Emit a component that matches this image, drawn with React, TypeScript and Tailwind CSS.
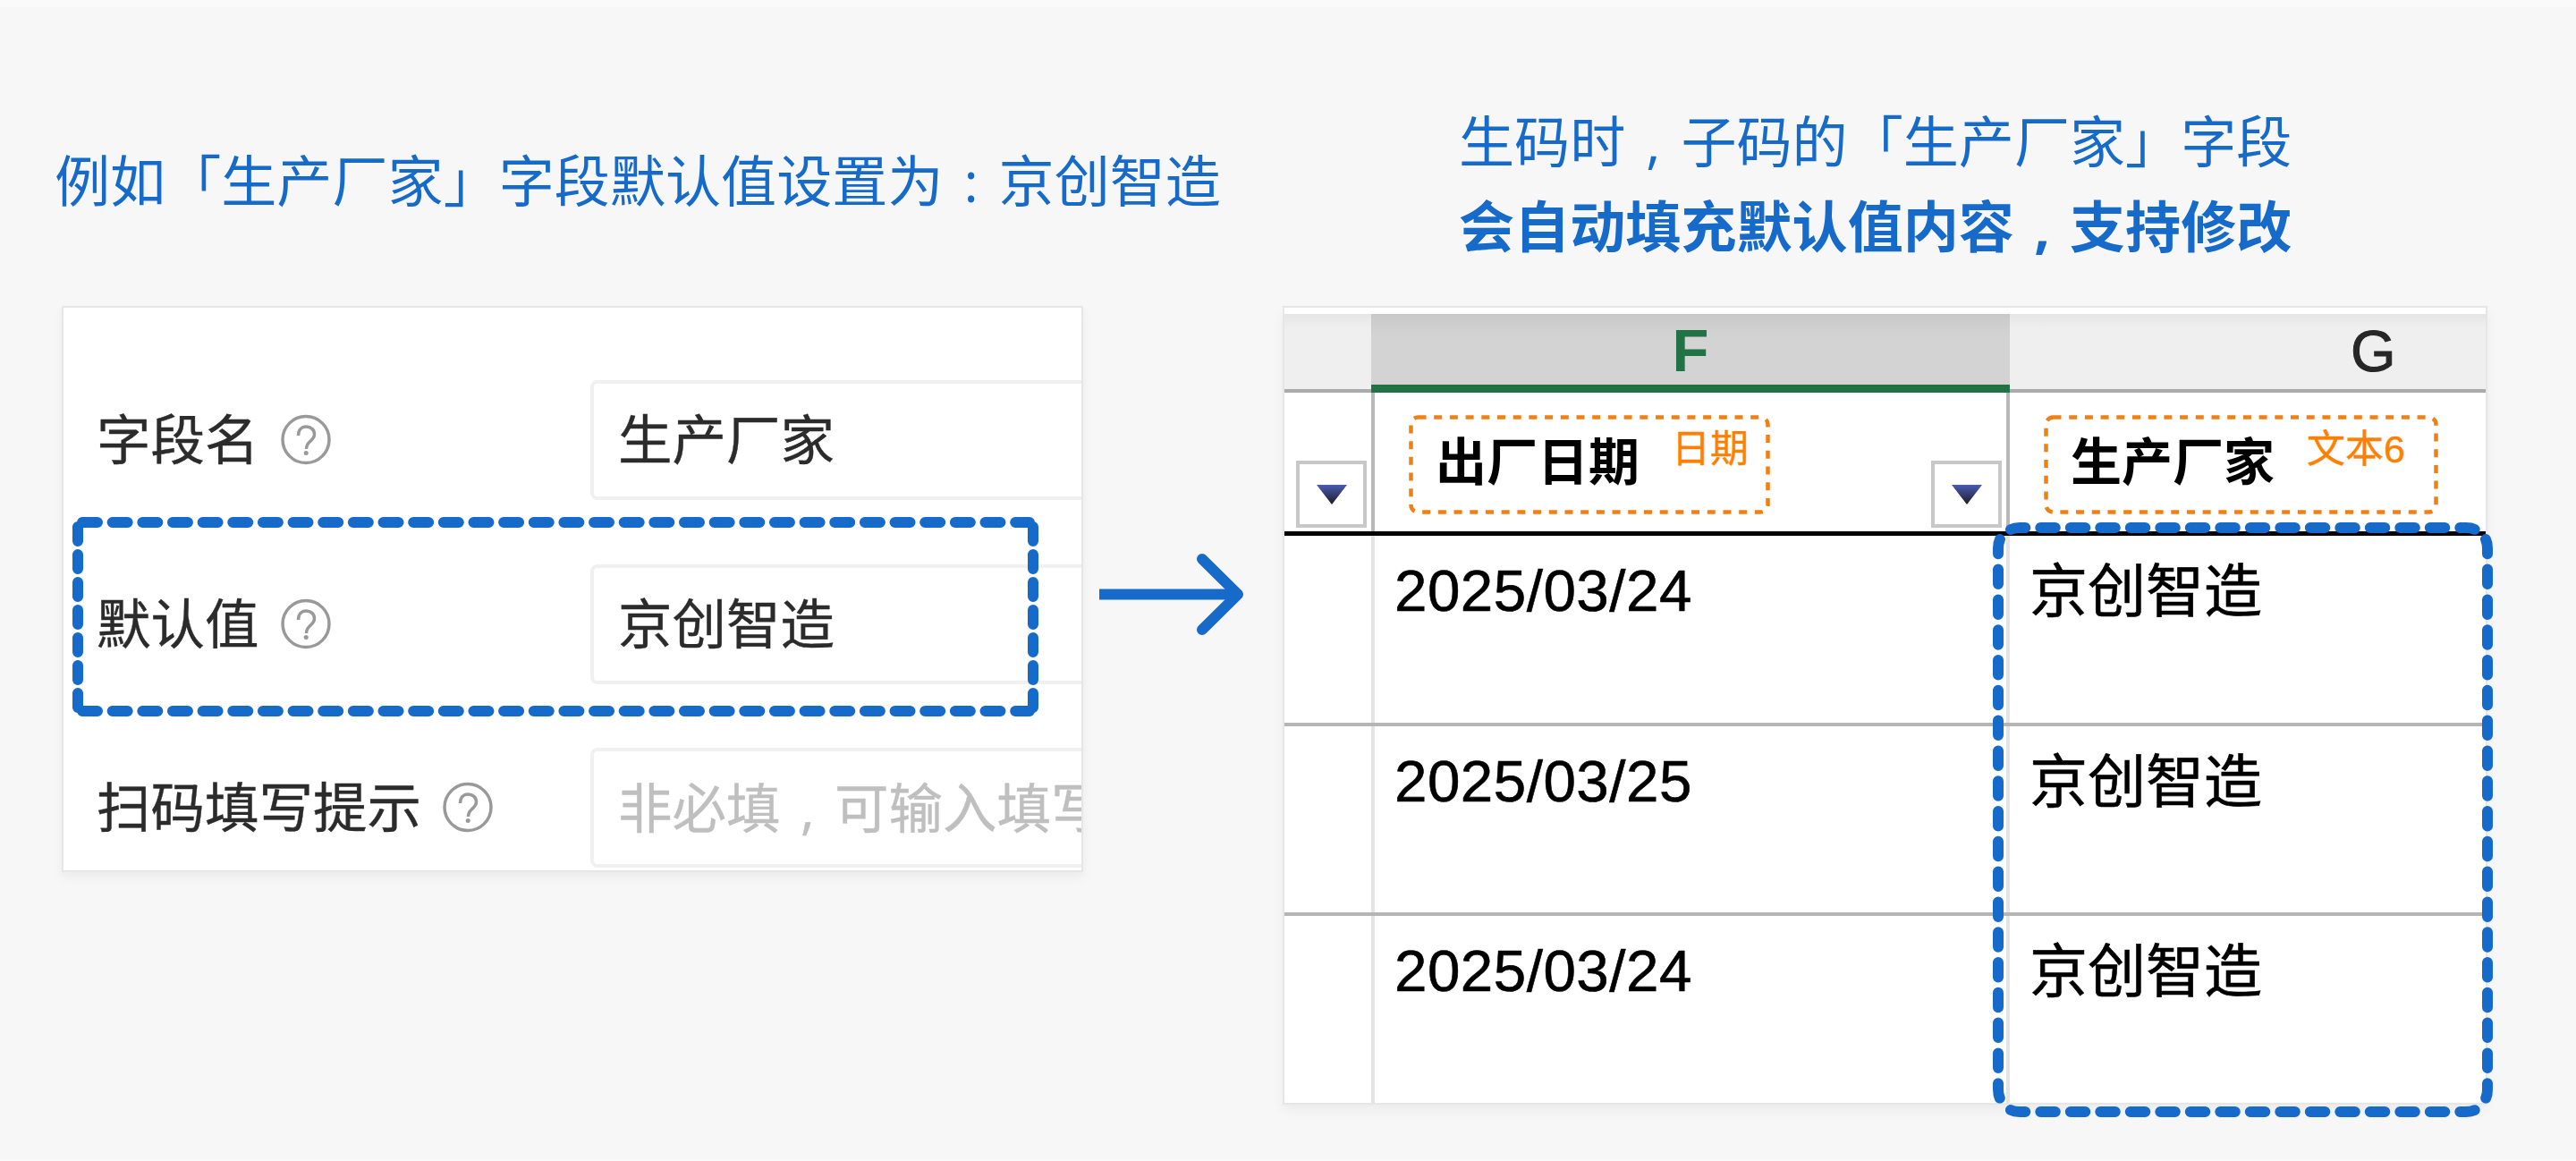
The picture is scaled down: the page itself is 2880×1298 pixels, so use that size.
import type { ReactNode } from "react";

const BLUE = "#166bca";

const fields = [
  { label: "字段名", value: "生产厂家", placeholder: false },
  { label: "默认值", value: "京创智造", placeholder: false },
  { label: "扫码填写提示", value: "非必填，可输入填写", placeholder: true },
];

const rows = [
  { date: "2025/03/24", maker: "京创智造" },
  { date: "2025/03/25", maker: "京创智造" },
  { date: "2025/03/24", maker: "京创智造" },
];

// Full-width cell with the punctuation mark centred in it
function Mark({ children }: { children: ReactNode }) {
  return (
    <span className="inline-block w-[1em] text-center font-['Open_Sans','Noto_Sans',sans-serif]">
      {children}
    </span>
  );
}

function HelpIcon() {
  return (
    <svg width="56" height="58" viewBox="0 0 56 58" fill="none" stroke="#999" strokeWidth="3.5">
      <circle cx="28" cy="28.5" r="26" />
      <path d="M19.500 24c0-6 3.500-10 8.800-10s9.200 3.500 9.200 8.500c0 4-2.500 6-5 8.200-2.500 2.200-4 3.800-4 8.300" />
      <circle cx="28.200" cy="43.500" r="2.500" fill="#999" stroke="none" />
    </svg>
  );
}

function FieldRow({ label, value, placeholder }: (typeof fields)[number]) {
  return (
    <div className="flex h-[134px] items-center">
      <div className="flex w-[552px] shrink-0 items-center gap-[24px] text-[60.500px] leading-none text-[#2b2b2b] [-webkit-text-stroke:0.4px]">
        <span className="pt-[3px]">{label}</span>
        <HelpIcon />
      </div>
      <div
        className={`flex h-full w-[600px] shrink-0 items-center rounded-l-[8px] border-4 border-[#f0f0f0] pl-[27px] text-[60.500px] leading-none whitespace-nowrap [-webkit-text-stroke:0.4px] ${
          placeholder ? "text-[#bfbfbf]" : "text-[#2b2b2b]"
        }`}
      >
        <span className="pt-[3px]">
          {value.split("，").map((part, i) => (
            <span key={part}>
              {i > 0 && <Mark>,</Mark>}
              {part}
            </span>
          ))}
        </span>
      </div>
    </div>
  );
}

function FilterButton() {
  return (
    <div className="flex h-[75px] w-[79px] items-center justify-center border-4 border-[#c8c8c8] bg-white">
      <svg width="34" height="22" viewBox="0 0 34 22">
        <defs>
          <linearGradient id="caret" x1="0" y1="0" x2="0" y2="1">
            <stop offset="0" stopColor="#4a5cb4" />
            <stop offset="1" stopColor="#1c1c24" />
          </linearGradient>
        </defs>
        <path d="M0 0H34L17 22Z" fill="url(#caret)" />
      </svg>
    </div>
  );
}

function HeaderTag({ title, type, width }: { title: string; type: ReactNode; width: number }) {
  return (
    <div className="relative flex h-[111px] items-start pl-[30px]" style={{ width }}>
      <svg className="absolute inset-0" width={width} height="111" fill="none" stroke="#f08012" strokeWidth="4.500">
        <rect x="2.500" y="2.500" width={width - 5} height="106" rx="8" strokeDasharray="9 8.700" />
      </svg>
      <span className="mt-[25px] text-[57px] leading-none font-bold text-black">{title}</span>
      <span className="mt-[17px] ml-[36px] text-[43px] leading-none text-[#ff8000] [-webkit-text-stroke:0.4px]">
        {type}
      </span>
    </div>
  );
}

export default function App() {
  return (
    <div className="relative h-[1298px] w-[2880px] overflow-hidden border-t-8 border-b-2 border-[#fafafa] bg-[#f7f7f7] font-['Liberation_Sans','Noto_Sans_CJK_SC',sans-serif]">
      <div className="flex">
        {/* Field settings */}
        <section className="w-[1370px] shrink-0 pl-[69px]">
          <h2 className="-ml-2 flex h-[334px] items-start pt-[163px] text-[62.100px] leading-[62px] whitespace-nowrap text-[#166bca]">
            <span>
              例如「生产厂家」字段默认值设置为<Mark>:</Mark>京创智造
            </span>
          </h2>
          <div className="flex h-[633px] w-[1142px] flex-col gap-[71.600px] overflow-hidden border-2 border-[#e6e6e6] bg-white pt-[81px] pl-[37px] shadow-[0_6px_12px_rgba(0,0,0,0.05)]">
            {fields.map((f) => (
              <FieldRow key={f.label} {...f} />
            ))}
          </div>
        </section>

        {/* Generated sheet */}
        <section className="pl-[64px]">
          <h2 className="flex h-[334px] flex-col pt-[104px] pl-[197px] text-[62.100px] leading-[93px] whitespace-nowrap text-[#166bca]">
            <span>
              生码时<Mark>,</Mark>子码的「生产厂家」字段
            </span>
            <span className="font-bold">
              会自动填充默认值内容<Mark>,</Mark>支持修改
            </span>
          </h2>
          <div className="w-[1347px] overflow-hidden border-2 border-[#e6e6e6] bg-white pt-[7px] shadow-[0_6px_12px_rgba(0,0,0,0.05)]">
            <div className="flex h-[88px] text-[65px] leading-none">
              <div className="w-[97px] shrink-0 border-b-4 border-[#ababab] bg-linear-to-b from-[#e6e6e6] to-[#efefef] to-20%" />
              <div className="flex w-[714px] shrink-0 items-center justify-center border-b-[9px] border-[#217346] bg-linear-to-b from-[#c9c9c9] to-[#d3d3d3] to-30% pt-[2px] text-[67px] font-bold text-[#217346]">
                F
              </div>
              <div className="flex w-[540px] shrink-0 items-center border-b-4 border-[#ababab] bg-linear-to-b from-[#e6e6e6] to-[#efefef] to-20% pb-[2px] pl-[381px] text-[#262626] [-webkit-text-stroke:1px]">
                G
              </div>
            </div>

            <div className="flex h-[160px] border-b-[5px] border-black">
              <div className="flex w-[97px] shrink-0 items-end pb-[4px] pl-[13px]">
                <FilterButton />
              </div>
              <div className="flex w-[710px] shrink-0 items-end justify-between border-l-4 border-[#b8b8b8] pr-[5px] pb-[4px] pl-[38px]">
                <div className="self-start pt-[25px]">
                  <HeaderTag title="出厂日期" type="日期" width={404} />
                </div>
                <FilterButton />
              </div>
              <div className="flex flex-1 items-start border-l-4 border-[#b8b8b8] pt-[25px] pl-[38px]">
                <HeaderTag title="生产厂家" type="文本6" width={441} />
              </div>
            </div>

            {rows.map((row, i) => (
              <div
                key={i}
                className="flex h-[212.700px] border-b-4 border-[#b5b5b5] text-[65px] leading-none text-black [-webkit-text-stroke:0.6px] last:h-[209px] last:border-b-0"
              >
                <div className="w-[97px] shrink-0" />
                <div className="w-[710px] shrink-0 border-l-4 border-[#e4e4e4] pt-[29px] pl-[22px] text-[65.500px] tracking-[0.500px]">
                  {row.date}
                </div>
                <div className="flex-1 border-l-4 border-[#e4e4e4] pt-[30px] pl-[22px]">{row.maker}</div>
              </div>
            ))}
          </div>
        </section>
      </div>

      {/* Callout outlines and arrow, drawn over both panels */}
      <svg
        className="absolute -top-2 left-0"
        width="2880"
        height="1298"
        fill="none"
        stroke={BLUE}
        strokeWidth="12"
        strokeLinecap="round"
      >
        <g strokeDasharray="17 16.650">
          <path d="M92 584H1151" />
          <path d="M92 795H1151" />
        </g>
        <g strokeDasharray="16 15">
          <path d="M87 589V791" />
          <path d="M1155 589V791" />
        </g>
        <g strokeDasharray="16.500 17">
          <path d="M2248 592Q2252 590 2258 590H2757Q2763 590 2767 592" />
          <path d="M2248 1241Q2252 1243 2258 1243H2757Q2763 1243 2767 1241" />
        </g>
        <g strokeDasharray="16.500 17.300">
          <path d="M2236 603Q2234 607 2234 613V1218Q2234 1224 2236 1228" />
          <path d="M2779 603Q2781 607 2781 613V1218Q2781 1224 2779 1228" />
        </g>
        <path d="M1344 625L1384 664.500L1344 704" strokeLinejoin="round" />
        <path d="M1229 664.500H1384" strokeLinecap="butt" />
      </svg>
    </div>
  );
}
